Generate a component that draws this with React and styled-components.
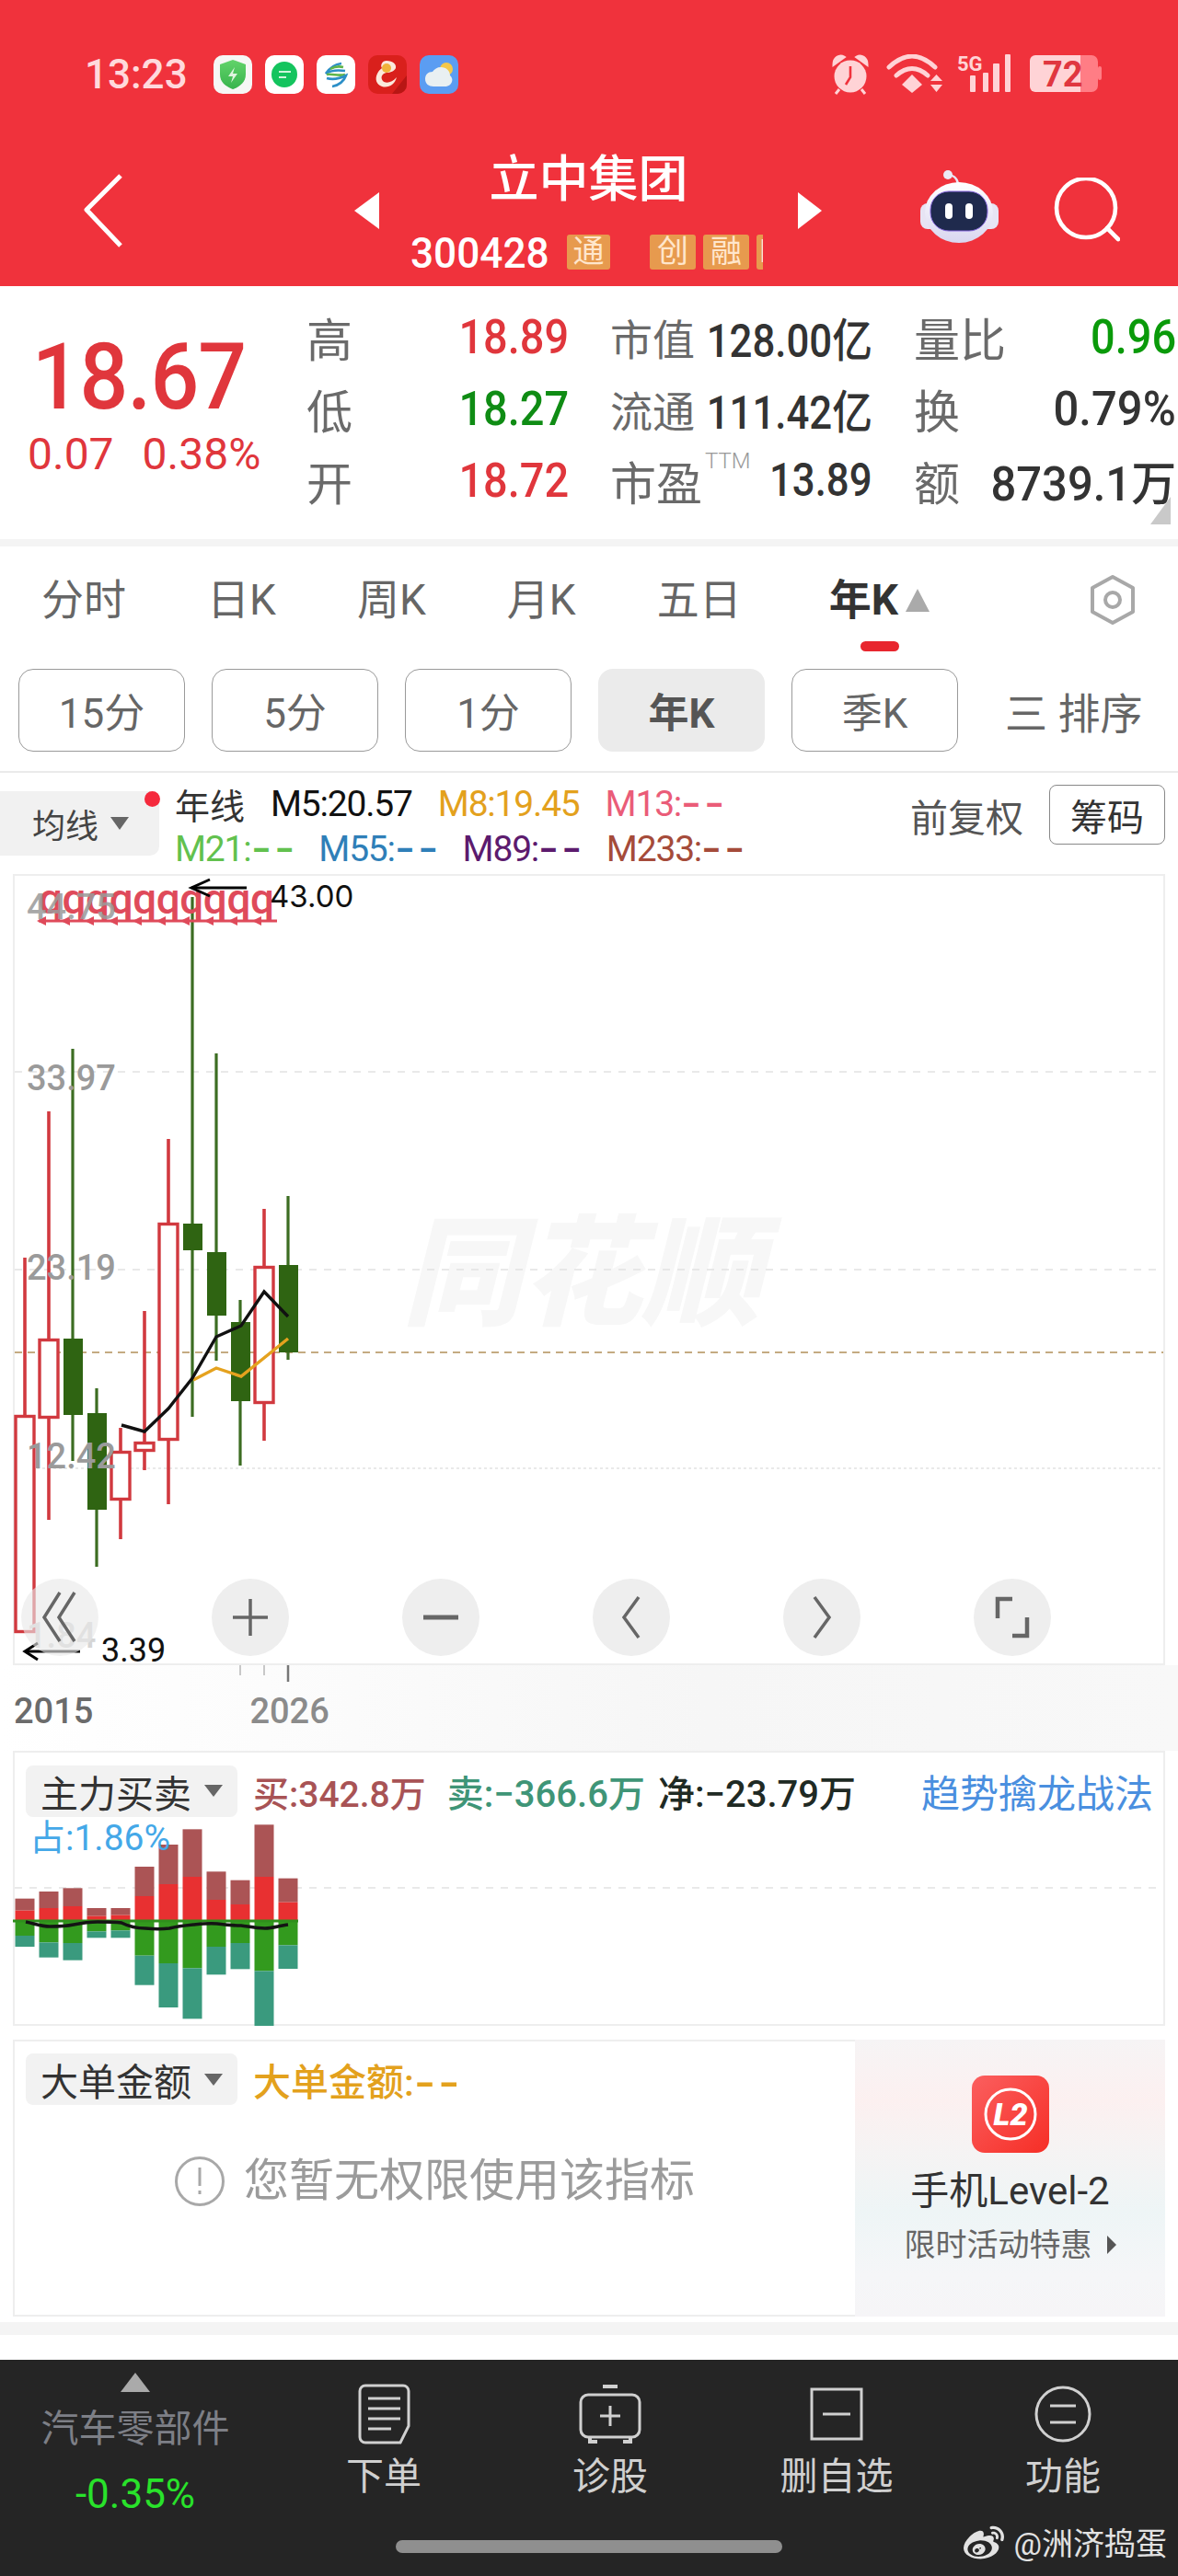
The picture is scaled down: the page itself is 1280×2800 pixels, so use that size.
import React from 'react';
import styled, { createGlobalStyle } from 'styled-components';
import { FaWeibo } from 'react-icons/fa';

const Global = createGlobalStyle`
  html, body { margin: 0; padding: 0; background: #fff; }
  * { box-sizing: border-box; }
  body { font-family: Roboto, "Noto Sans CJK SC", sans-serif; }
`;

const Page = styled.div`
  width: 1280px;
  height: 2800px;
  overflow: hidden;
  display: flex;
  flex-direction: column;
  background: #fff;
`;

/* ---------- header ---------- */
const Header = styled.header`
  height: 311px;
  background: #f0323c;
  padding-top: 60px;
  color: #fff;
`;
const StatusBar = styled.div`
  height: 42px;
  padding: 0 81px 0 92px;
  display: flex;
  align-items: center;
  justify-content: space-between;
`;
const StatusLeft = styled.div`
  display: flex;
  align-items: center;
  gap: 14px;
`;
const Clock = styled.span`
  font-size: 44px;
  font-weight: 500;
  color: #ffd9dc;
  width: 126px;
`;
const AppTile = styled.div`
  width: 42px;
  height: 42px;
  border-radius: 10px;
  overflow: hidden;
  background: ${p => p.$bg || '#fff'};
  display: flex;
`;
const StatusRight = styled.div`
  display: flex;
  align-items: center;
`;
const Nav = styled.nav`
  margin-top: 63px;
  height: 128px;
  padding-left: 90px;
  display: flex;
  align-items: center;
`;
const Tri = styled.i`
  display: block;
  width: 0;
  height: 0;
  border-top: ${p => p.$h / 2}px solid transparent;
  border-bottom: ${p => p.$h / 2}px solid transparent;
  ${p => (p.$right ? `border-left: ${p.$w}px solid #fff;` : `border-right: ${p.$w}px solid #fff;`)}
`;
const BackSlot = styled.div`
  width: 322px;
  display: flex;
  justify-content: space-between;
  align-items: center;
  flex: none;
`;
const TitleBlock = styled.div`
  width: 455px;
  flex: none;
  display: flex;
  flex-direction: column;
  align-items: center;
`;
const Title = styled.div`
  font-size: 54px;
  line-height: 62px;
  font-weight: 500;
`;
const CodeRow = styled.div`
  margin-top: 28px;
  width: 383px;
  height: 38px;
  overflow: hidden;
  display: flex;
  align-items: center;
  transform: translateX(-2px);
`;
const Code = styled.span`
  font-size: 47px;
  font-weight: 500;
  width: 162px;
  flex: none;
  transform: scaleX(0.94);
  transform-origin: left center;
`;
const Tag = styled.span`
  flex: none;
  height: 38px;
  width: ${p => p.$w || 50}px;
  margin-left: ${p => p.$ml || 8}px;
  background: #e79a4e;
  color: #ffe6cc;
  font-size: 34px;
  line-height: 36px;
  border-radius: 3px;
  text-align: center;
  overflow: hidden;
  white-space: nowrap;
`;
const NavRight = styled.div`
  display: flex;
  align-items: center;
`;

/* ---------- quote ---------- */
const Quote = styled.section`
  position: relative;
  height: 275px;
  display: flex;
`;
const PriceCol = styled.div`
  width: 333px;
  flex: none;
  padding: 47px 0 0 30px;
`;
const Price = styled.div`
  font-size: 100px;
  line-height: 104px;
  font-weight: 500;
  color: #e0363c;
  padding-left: 5px;
  letter-spacing: -1px;
  transform: scaleX(0.93);
  transform-origin: left center;
`;
const PriceSub = styled.div`
  margin-top: 5px;
  display: flex;
  gap: 31px;
  font-size: 48px;
  line-height: 54px;
  color: #e0363c;
`;
const StatGrid = styled.div`
  width: 947px;
  padding-top: 16px;
  display: grid;
  grid-template-columns: repeat(3, 285px);
  grid-auto-rows: 78px;
  column-gap: 45px;
  align-content: start;
`;
const Stat = styled.div`
  display: flex;
  align-items: center;
  justify-content: space-between;
  white-space: nowrap;
`;
const StatLabel = styled.span`
  font-size: ${p => p.$size || 50}px;
  color: #6a6a6a;
  display: flex;
  align-items: flex-start;
`;
const Sup = styled.sup`
  font-size: 24px;
  line-height: 30px;
  color: #999;
  font-weight: 300;
  margin-left: 3px;
  vertical-align: top;
`;
const StatValue = styled.span`
  font-size: ${p => p.$size || 51}px;
  font-weight: 500;
  color: ${p => p.$color || '#333'};
  margin-left: -60px;
  transform: scaleX(${p => p.$scale || 0.92});
  transform-origin: right center;
`;
const Corner = styled.i`
  position: absolute;
  right: 8px;
  bottom: 16px;
  width: 22px;
  height: 30px;
  background: #c9c9c9;
  clip-path: polygon(100% 0, 100% 100%, 0 100%);
`;
const Band = styled.div`
  height: ${p => p.$h}px;
  background: #f4f4f4;
  flex: none;
`;

/* ---------- tabs ---------- */
const TabRow = styled.div`
  height: 116px;
  margin-bottom: 17px;
  padding: 0 43px 0 45px;
  display: flex;
  align-items: center;
  gap: 88px;
`;
const Tab = styled.span`
  position: relative;
  font-size: 46px;
  line-height: 60px;
  color: ${p => (p.$active ? '#333' : '#666')};
  font-weight: ${p => (p.$active ? 700 : 400)};
  display: flex;
  align-items: center;
  gap: 8px;
  margin-left: ${p => (p.$active ? 7 : 0)}px;
  ${p =>
    p.$active &&
    `&::after {
      content: '';
      position: absolute;
      left: 34px;
      bottom: -26px;
      width: 42px;
      height: 11px;
      border-radius: 6px;
      background: #e8262e;
    }`}
`;
const Caret = styled.i`
  display: block;
  width: 0;
  height: 0;
  flex: none;
  border-left: ${p => p.$w / 2}px solid transparent;
  border-right: ${p => p.$w / 2}px solid transparent;
  ${p => (p.$up ? 'border-bottom' : 'border-top')}: ${p => p.$h}px solid ${p => p.$color};
`;
const TabSettings = styled.span`
  margin-left: auto;
  display: flex;
`;
const PeriodRow = styled.div`
  padding-left: 20px;
  display: flex;
  gap: 29px;
  align-items: center;
  height: 90px;
`;
const Period = styled.div`
  width: 181px;
  height: 90px;
  border-radius: 16px;
  border: ${p => (p.$active ? 'none' : '1px solid #9a9a9a')};
  background: ${p => (p.$active ? '#ebebeb' : '#fff')};
  font-size: 44px;
  font-weight: ${p => (p.$active ? 700 : 400)};
  color: ${p => (p.$active ? '#555' : '#666')};
  display: flex;
  align-items: center;
  justify-content: center;
`;
const Sort = styled.div`
  margin-left: 22px;
  font-size: 46px;
  color: #666;
  white-space: pre;
`;
const Divider = styled.div`
  margin-top: 21px;
  height: 2px;
  background: #eaeaea;
`;

/* ---------- indicators ---------- */
const IndicatorRow = styled.div`
  height: 110px;
  display: flex;
  align-items: flex-start;
`;
const MaPill = styled.div`
  position: relative;
  margin-top: 20px;
  width: 173px;
  height: 70px;
  border-radius: 0 10px 10px 0;
  background: #f1f1f1;
  padding-left: 35px;
  display: flex;
  align-items: center;
  gap: 13px;
  font-size: 36px;
  color: #444;
`;
const RedDot = styled.i`
  position: absolute;
  right: -1px;
  top: 0;
  width: 17px;
  height: 17px;
  border-radius: 50%;
  background: #f5293c;
`;
const Legend = styled.div`
  margin: 9px 0 0 17px;
  display: flex;
  flex-direction: column;
`;
const LegendLine = styled.div`
  height: 49px;
  display: flex;
  align-items: center;
  gap: 28px;
`;
const LegendItem = styled.span`
  font-size: ${p => p.$size || 39}px;
  color: ${p => p.$color || '#111'};
  letter-spacing: ${p => (p.$size ? 0 : -1.2)}px;
  white-space: nowrap;
`;
const Dashes = styled.span`
  display: inline-block;
  margin-right: 11px;
  letter-spacing: 2px;
  font-weight: 700;
  transform: scaleX(1.45);
  transform-origin: left center;
`;
const IndicatorTools = styled.div`
  margin-left: auto;
  padding: 13px 14px 0 0;
  display: flex;
  align-items: center;
  gap: 28px;
`;
const ToolText = styled.span`
  font-size: 41px;
  color: #555;
`;
const ChipBtn = styled.span`
  width: 126px;
  height: 65px;
  border: 1px solid #888;
  border-radius: 8px;
  font-size: 40px;
  color: #333;
  display: flex;
  align-items: center;
  justify-content: center;
`;

/* ---------- chart ---------- */
const ChartBox = styled.div`
  position: relative;
  margin: 0 14px;
  height: 860px;
  border: 2px solid #eee;
  flex: none;
`;
const FullSvg = styled.svg`
  position: absolute;
  left: -2px;
  top: -2px;
  display: block;
`;
const RoundRow = styled.div`
  position: absolute;
  left: 7px;
  bottom: 8px;
  display: flex;
  gap: 123px;
`;
const RoundBtn = styled.div`
  width: 84px;
  height: 84px;
  border-radius: 50%;
  background: ${p => (p.$ghost ? 'rgba(232,232,232,.62)' : '#eeeeee')};
  display: flex;
  align-items: center;
  justify-content: center;
`;
const AxisArea = styled.div`
  height: 93px;
  flex: none;
  background: linear-gradient(90deg, #fff 0, #fbfbfb 30%, #f6f6f6 60%, #f8f8f8 100%);
`;
const TickStrip = styled.svg`
  display: block;
  margin-left: 258px;
`;
const YearRow = styled.div`
  margin-top: 9px;
  padding-left: 15px;
  display: flex;
  gap: 170px;
  font-size: 38px;
  line-height: 44px;
  font-weight: 500;
  color: #6b6b6b;
`;
const FadedYear = styled.span`
  color: #8b8b8b;
`;

/* ---------- panels ---------- */
const Panel = styled.div`
  position: relative;
  margin: 0 14px;
  height: ${p => p.$h}px;
  border: 2px solid #eee;
  flex: none;
  display: flex;
`;
const PanelBody = styled.div`
  position: relative;
  flex: 1;
  min-width: 0;
  padding: 11px 0 0 12px;
`;
const PanelHead = styled.div`
  display: flex;
  align-items: center;
  gap: 17px;
  padding-right: 11px;
`;
const PickPill = styled.div`
  width: 230px;
  height: 56px;
  border-radius: 8px;
  background: #f2f2f2;
  padding-left: 16px;
  display: flex;
  align-items: center;
  gap: 14px;
  font-size: 41px;
  color: #333;
  flex: none;
`;
const FlowVal = styled.span`
  font-size: ${p => p.$size || 39}px;
  color: ${p => p.$color};
  font-weight: 500;
  white-space: nowrap;
  margin-left: ${p => p.$ml || 0}px;
`;
const Promo = styled.span`
  margin-left: auto;
  font-size: 42px;
  color: #4a8fdf;
`;
const Occupy = styled.div`
  margin: -2px 0 0 4px;
  font-size: 39px;
  line-height: 46px;
  color: #44a8e8;
`;
const Warn = styled.div`
  margin-top: 52px;
  display: flex;
  align-items: center;
  justify-content: center;
  gap: 21px;
  font-size: 49px;
  line-height: 58px;
  color: #9b9b9b;
  padding-right: 12px;
`;
const Ad = styled.aside`
  width: 337px;
  flex: none;
  margin: -2px -2px -2px 0;
  background: linear-gradient(180deg, #f6f4f5 0, #fcf0f0 22%, #f6f3f3 38%, #eef5f6 62%, #f5f6f8 85%, #f6f5f7 100%);
  display: flex;
  flex-direction: column;
  align-items: center;
  padding-top: 39px;
`;
const AdTitle = styled.div`
  margin-top: 17px;
  font-size: 42px;
  line-height: 50px;
  color: #333;
`;
const AdSub = styled.div`
  margin-top: 11px;
  font-size: 34px;
  line-height: 44px;
  color: #666;
  display: flex;
  align-items: center;
  gap: 16px;
`;
const SideCaret = styled.i`
  display: block;
  width: 0;
  height: 0;
  border-top: 10px solid transparent;
  border-bottom: 10px solid transparent;
  border-left: 10px solid #555;
`;

/* ---------- footer ---------- */
const Spacer = styled.div`
  height: ${p => p.$h}px;
  flex: none;
`;
const Footer = styled.footer`
  position: relative;
  flex: 1;
  background: #252525;
  display: flex;
  flex-direction: column;
`;
const FootRow = styled.div`
  height: 196px;
  display: flex;
`;
const Sector = styled.div`
  width: 294px;
  padding-top: 14px;
  display: flex;
  flex-direction: column;
  align-items: center;
`;
const SectorName = styled.div`
  margin-top: 16px;
  font-size: 41px;
  line-height: 48px;
  color: #7d7f86;
`;
const SectorPct = styled.div`
  margin-top: 23px;
  font-size: 44px;
  line-height: 48px;
  color: #29e22b;
`;
const FootItem = styled.div`
  width: 246px;
  padding-top: 25px;
  display: flex;
  flex-direction: column;
  align-items: center;
`;
const FootIcon = styled.div`
  height: 68px;
  display: flex;
  align-items: center;
  justify-content: center;
`;
const FootLabel = styled.div`
  margin-top: 9px;
  font-size: 41px;
  line-height: 50px;
  color: #d0d0d0;
`;
const HomeBar = styled.div`
  align-self: center;
  width: 420px;
  height: 14px;
  border-radius: 7px;
  background: #8f8f8f;
`;
const Mark = styled.div`
  position: absolute;
  right: 12px;
  bottom: 13px;
  display: flex;
  align-items: center;
  gap: 10px;
  font-size: 34px;
  line-height: 42px;
  color: #e2e2e2;
`;

/* ---------- data ---------- */
const RED = '#d1393f';
const GRN = '#2f6412';
const candles = [
  { up: 1, wt: 1367, wb: 1775, bt: 1538, bb: 1775 },
  { up: 1, wt: 1208, wb: 1652, bt: 1455, bb: 1542 },
  { up: 0, wt: 1140, wb: 1588, bt: 1455, bb: 1538 },
  { up: 0, wt: 1509, wb: 1703, bt: 1536, bb: 1641 },
  { up: 1, wt: 1552, wb: 1673, bt: 1577, bb: 1631 },
  { up: 1, wt: 1425, wb: 1598, bt: 1567, bb: 1578 },
  { up: 1, wt: 1238, wb: 1635, bt: 1329, bb: 1566 },
  { up: 0, wt: 975, wb: 1540, bt: 1330, bb: 1359 },
  { up: 0, wt: 1145, wb: 1479, bt: 1361, bb: 1430 },
  { up: 0, wt: 1413, wb: 1593, bt: 1437, bb: 1523 },
  { up: 1, wt: 1314, wb: 1566, bt: 1376, bb: 1526 },
  { up: 0, wt: 1300, wb: 1478, bt: 1375, bb: 1470 },
];
const flows = [
  [551, 590, 672, 708],
  [528, 582, 694, 743],
  [517, 576, 696, 752],
  [582, 608, 658, 679],
  [582, 605, 655, 679],
  [447, 543, 737, 833],
  [375, 504, 762, 906],
  [325, 480, 778, 943],
  [463, 555, 708, 799],
  [491, 570, 696, 781],
  [310, 480, 787, 966],
  [485, 563, 703, 780],
];
const cx = i => 27 + 26 * i;

const Candle = ({ c, i }) => {
  const x = cx(i);
  const color = c.up ? RED : GRN;
  return (
    <g>
      <line x1={x} x2={x} y1={c.wt} y2={c.wb} stroke={c.up ? RED : '#3c6d22'} strokeWidth={c.up ? 3.6 : 3.2} />
      <rect
        x={x - 10}
        y={c.bt + (c.up ? 1.5 : 0)}
        width={c.up ? 20 : 21}
        height={c.bb - c.bt - (c.up ? 3 : 0)}
        fill={c.up ? '#fff' : color}
        stroke={c.up ? RED : 'none'}
        strokeWidth="3.4"
      />
    </g>
  );
};

const ArrowLeft = ({ x1, x2, y, head = 20 }) => (
  <g stroke="#000" strokeWidth="3" fill="none">
    <path d={`M${x2} ${y}H${x1}`} />
    <path d={`M${x1 + head} ${y - 9}L${x1} ${y}L${x1 + head} ${y + 9}`} />
  </g>
);

const MainChart = () => (
  <FullSvg width="1252" height="860" viewBox="14 950 1252 860">
    <text x="632" y="1430" fontSize="130" fontWeight="900" fontStyle="italic" textAnchor="middle" fill="#f7f7f7" fontFamily='"Noto Sans CJK SC", sans-serif'>同花顺</text>
    {[1165, 1380, 1596].map(y => (
      <line key={y} x1="16" x2="1264" y1={y} y2={y} stroke="#e2e2e2" strokeWidth="1.5" strokeDasharray={y === 1596 ? '3 3' : '8 8'} />
    ))}
    <line x1="16" x2="1264" y1="1470" y2="1470" stroke="#c4ab82" strokeWidth="2" strokeDasharray="8 6" />
    {candles.map((c, i) => (
      <Candle key={i} c={c} i={i} />
    ))}
    <polyline points="210,1500 235,1487 262,1496 313,1455" fill="none" stroke="#e5a21e" strokeWidth="3.4" />
    <polyline points="132,1549 157,1556 183,1531 209,1498 235,1453 262,1441 287,1404 313,1431" fill="none" stroke="#111" strokeWidth="3.4" />
    <text x="42" y="993" fontFamily="Roboto, sans-serif" fontWeight="500" fontSize="46" fill="#df4a5a" textLength="256">qqqqqqqqqq</text>
    <line x1="42" x2="301" y1="1001" y2="1001" stroke="#df4a5a" strokeWidth="3" />
    {Array.from({ length: 10 }).map((_, i) => (
      <path key={i} d={`M${40 + 26 * i} 1001l10 -5v10z`} fill="#df4a5a" />
    ))}
    <g fontFamily="Roboto, sans-serif" fontWeight="500" fontSize="38" fill="#9a9a9a">
      <text x="29" y="999" opacity="0.85">44.75</text>
      <text x="29" y="1185">33.97</text>
      <text x="29" y="1391">23.19</text>
      <text x="29" y="1596">12.42</text>
      <text x="29" y="1791" fill="#d5d5d5">1.84</text>
    </g>
    <ArrowLeft x1={208} x2={268} y={965} />
    <text x="293" y="986" fontFamily="Inter, sans-serif" fontSize="33" fill="#111">43.00</text>
    <ArrowLeft x1={27} x2={87} y={1795} head={14} />
    <text x="110" y="1806" fontFamily="Roboto, sans-serif" fontSize="36" fill="#111">3.39</text>
  </FullSvg>
);

const glyph = { stroke: '#666', strokeWidth: 3.5, fill: 'none' };
const RoundIcon = ({ children }) => (
  <svg width="60" height="60" viewBox="0 0 60 60" {...glyph}>
    {children}
  </svg>
);

const FlowChart = () => (
  <FullSvg width="1252" height="299" viewBox="14 1903 1252 299">
    <line x1="16" x2="1264" y1="2052" y2="2052" stroke="#e2e2e2" strokeWidth="1.5" strokeDasharray="8 8" />
    {flows.map((f, i) => {
      const y = v => 1880 + v / 3;
      const x = cx(i) - 10.5;
      return (
        <g key={i}>
          <rect x={x} y={y(f[0])} width="21" height={y(f[1]) - y(f[0])} fill="#ab5455" />
          <rect x={x} y={y(f[1])} width="21" height={y(622) - y(f[1])} fill="#e83031" />
          <rect x={x} y={y(622)} width="21" height={y(f[2]) - y(622)} fill="#339a1e" />
          <rect x={x} y={y(f[2])} width="21" height={y(f[3]) - y(f[2])} fill="#3a9a7e" />
        </g>
      );
    })}
    <line x1="14" x2="324" y1="2088" y2="2088" stroke="#2e8f1c" strokeWidth="3" />
    <path
      d="M28 2089C38 2091 46 2094 54 2094C62 2094 70 2094 80 2092C90 2090 98 2089 106 2089C114 2089 124 2089 132 2090C140 2094 148 2096 158 2096C168 2097 176 2097 184 2096C192 2094 200 2093 210 2092C220 2091 228 2090 236 2091C244 2092 252 2093 262 2093C270 2094 278 2096 288 2096C296 2096 304 2093 313 2092"
      fill="none"
      stroke="#141414"
      strokeWidth="3.6"
    />
  </FullSvg>
);

export default function App() {
  return (
    <Page>
      <Global />
      <Header>
        <StatusBar>
          <StatusLeft>
            <Clock>13:23</Clock>
            <AppTile $bg="#f6f7f5">
              <svg width="42" height="42" viewBox="0 0 42 42">
                <defs>
                  <linearGradient id="sh" x1="0" x2="0" y1="0" y2="1">
                    <stop offset="0" stopColor="#62d36a" />
                    <stop offset="1" stopColor="#38b44c" />
                  </linearGradient>
                </defs>
                <path d="M21 5l14 5v11c0 8-6 13-14 16C13 34 7 29 7 21V10z" fill="url(#sh)" />
                <path d="M23 13l-7 10h5l-2 7 7-10h-5z" fill="#dff5de" />
              </svg>
            </AppTile>
            <AppTile>
              <svg width="42" height="42" viewBox="0 0 42 42">
                <circle cx="21" cy="21" r="14" fill="#14c45e" />
                <path d="M11 31l2-7 5 5z" fill="#14c45e" />
                <path d="M15 18h13M15 24h8" stroke="#cff5dc" strokeWidth="2.2" />
              </svg>
            </AppTile>
            <AppTile>
              <svg width="42" height="42" viewBox="0 0 42 42" fill="none" strokeWidth="2.6">
                <path d="M27 9C19 10 14 14 10 20C16 16 24 16 31 17" stroke="#2c8fc7" />
                <path d="M11 21C17 20 25 23 31 21" stroke="#5fb54a" />
                <path d="M11 25C18 27 24 26 32 22C30 28 24 33 17 34" stroke="#2c8fc7" />
                <path d="M15 15C20 12 25 12 29 13" stroke="#5fb54a" />
              </svg>
            </AppTile>
            <AppTile $bg="#d9201c">
              <svg width="42" height="42" viewBox="0 0 42 42">
                <path d="M20 6c7 0 11 4 10 8-1 3-6 5-10 5-5 1-7 5-4 9 3 3 10 2 15-4-2 8-9 12-16 10C9 32 7 26 10 20c2-4 4-5 5-6-2-3 0-8 5-8z" fill="#fbe9dc" />
                <circle cx="20" cy="14" r="5" fill="#f0b23a" />
                <path d="M26 42L42 22v20z" fill="#b81614" />
              </svg>
            </AppTile>
            <AppTile $bg="#5b9df2">
              <svg width="42" height="42" viewBox="0 0 42 42">
                <circle cx="29" cy="15" r="7" fill="#f4c84a" />
                <path d="M15 34c-5 0-9-3-9-8s3-8 8-8c2-3 5-5 9-5 6 0 10 4 10 9 2 2 3 4 2 7-1 3-4 5-8 5z" fill="#e9f0f2" />
              </svg>
            </AppTile>
          </StatusLeft>
          <StatusRight>
            <svg width="296" height="44" viewBox="0 0 296 44" fill="#ffd3d6">
              <circle cx="21" cy="24" r="17.5" />
              <path d="M3 11C3 4 9 0 14 3zM39 11c0-7-6-11-11-8zM9 38l-4 5M33 38l4 5" stroke="#ffd3d6" strokeWidth="3" />
              <path d="M21 13v12l-5 8" stroke="#f0323c" strokeWidth="2.6" fill="none" />
              <path d="M63 14C80 -2 96 -2 113 14M71 23c11 -10 23 -10 34 0" stroke="#ffd3d6" strokeWidth="5" fill="none" strokeLinecap="round" />
              <path d="M88 22l11 11-11 9-11-9z" />
              <path d="M108 25h13l-6.500-7zM108 29h13l-6.500 8z" transform="translate(0 4)" />
              <text x="137" y="18" fontFamily="Roboto, sans-serif" fontWeight="700" fontSize="22">5G</text>
              <rect x="151" y="23" width="6" height="18" rx="1" />
              <rect x="165" y="20" width="6" height="21" rx="1" />
              <rect x="176" y="10" width="7" height="31" rx="1" />
              <rect x="189" y="0" width="6" height="41" rx="1" />
              <path d="M216 7a6 6 0 0 1 6 -6h49v40h-49a6 6 0 0 1 -6 -6z" />
              <path d="M271 1h12a7 7 0 0 1 7 7v26a7 7 0 0 1 -7 7h-12z" fill="#ff7d85" />
              <rect x="290" y="13" width="4" height="15" rx="2" fill="#ff7d85" />
              <text x="230" y="35" fontFamily="Roboto, sans-serif" fontWeight="700" fontSize="38" fill="#e03640">72</text>
            </svg>
          </StatusRight>
        </StatusBar>
        <Nav>
          <BackSlot>
            <svg width="44" height="80" viewBox="0 0 44 80" fill="none" stroke="#fff" strokeWidth="5">
              <path d="M41 2L4 39L41 78" strokeLinejoin="round" />
            </svg>
            <Tri $w={27} $h={41} />
          </BackSlot>
          <TitleBlock>
            <Title>立中集团</Title>
            <CodeRow>
              <Code>300428</Code>
              <Tag $w={47} $ml={0}>通</Tag>
              <Tag $ml={43}>创</Tag>
              <Tag>融</Tag>
              <Tag $w={15}>l</Tag>
            </CodeRow>
          </TitleBlock>
          <Tri $right $w={26} $h={41} />
          <NavRight>
            <svg width="86" height="88" viewBox="0 0 86 88" style={{ marginLeft: 107 }}>
              <defs>
                <linearGradient id="rb" x1="0" x2="0" y1="0" y2="1">
                  <stop offset="0" stopColor="#ffffff" />
                  <stop offset="1" stopColor="#d9d6f0" />
                </linearGradient>
              </defs>
              <path d="M41 15c-1-7-6-10-11-10" stroke="#e9e6f5" strokeWidth="2.5" fill="none" />
              <circle cx="30" cy="5" r="5" fill="#eceaf6" />
              <rect x="0" y="36" width="85" height="28" rx="8" fill="#e7e4f4" />
              <ellipse cx="42" cy="46" rx="37" ry="33" fill="url(#rb)" />
              <rect x="11" y="23" width="62" height="43" rx="20" fill="#1f2a4d" stroke="#8b6be0" strokeWidth="1" />
              <rect x="27" y="36" width="8" height="17" rx="4" fill="#fff" />
              <rect x="49" y="36" width="8" height="17" rx="4" fill="#fff" />
            </svg>
            <svg width="72" height="72" viewBox="0 0 72 72" fill="none" stroke="#fff" strokeWidth="4.6" style={{ marginLeft: 59 }}>
              <circle cx="35" cy="33" r="32" />
              <path d="M58 55l12 12" strokeLinecap="round" />
            </svg>
          </NavRight>
        </Nav>
      </Header>

      <Quote>
        <PriceCol>
          <Price>18.67</Price>
          <PriceSub>
            <span>0.07</span>
            <span>0.38%</span>
          </PriceSub>
        </PriceCol>
        <StatGrid>
          <Stat><StatLabel>高</StatLabel><StatValue $color="#e0363c">18.89</StatValue></Stat>
          <Stat><StatLabel $size={46}>市值</StatLabel><StatValue $size={50} $scale={0.875}>128.00亿</StatValue></Stat>
          <Stat><StatLabel>量比</StatLabel><StatValue $color="#0a9a0a">0.96</StatValue></Stat>
          <Stat><StatLabel>低</StatLabel><StatValue $color="#0f8c14">18.27</StatValue></Stat>
          <Stat><StatLabel $size={46}>流通</StatLabel><StatValue $size={50} $scale={0.875}>111.42亿</StatValue></Stat>
          <Stat><StatLabel>换</StatLabel><StatValue $scale={0.96}>0.79%</StatValue></Stat>
          <Stat><StatLabel>开</StatLabel><StatValue $color="#e0363c">18.72</StatValue></Stat>
          <Stat><StatLabel>市盈<Sup>TTM</Sup></StatLabel><StatValue $size={50} $scale={0.875}>13.89</StatValue></Stat>
          <Stat><StatLabel>额</StatLabel><StatValue $scale={0.96}>8739.1万</StatValue></Stat>
        </StatGrid>
        <Corner />
      </Quote>
      <Band $h={8} />

      <TabRow>
        <Tab>分时</Tab>
        <Tab>日K</Tab>
        <Tab>周K</Tab>
        <Tab>月K</Tab>
        <Tab>五日</Tab>
        <Tab $active>
          年K
          <Caret $up $w={27} $h={25} $color="#aaa" />
        </Tab>
        <TabSettings>
          <svg width="56" height="56" viewBox="0 0 56 56" fill="none" stroke="#a8a8a8" strokeWidth="4">
            <path d="M28 3L50 15V41L28 53L6 41V15Z" strokeLinejoin="round" />
            <circle cx="28" cy="28" r="8" />
          </svg>
        </TabSettings>
      </TabRow>
      <PeriodRow>
        <Period>15分</Period>
        <Period>5分</Period>
        <Period>1分</Period>
        <Period $active>年K</Period>
        <Period>季K</Period>
        <Sort>三 排序</Sort>
      </PeriodRow>
      <Divider />

      <IndicatorRow>
        <MaPill>
          均线
          <Caret $w={20} $h={14} $color="#666" />
          <RedDot />
        </MaPill>
        <Legend>
          <LegendLine>
            <LegendItem $size={38} $color="#333">年线</LegendItem>
            <LegendItem>M5:20.57</LegendItem>
            <LegendItem $color="#e3a11d">M8:19.45</LegendItem>
            <LegendItem $color="#ea5c78">M13:<Dashes>--</Dashes></LegendItem>
          </LegendLine>
          <LegendLine>
            <LegendItem $color="#62c14e">M21:<Dashes>--</Dashes></LegendItem>
            <LegendItem $color="#2f7fb8">M55:<Dashes>--</Dashes></LegendItem>
            <LegendItem $color="#5c1b6e">M89:<Dashes>--</Dashes></LegendItem>
            <LegendItem $color="#a54b3a">M233:<Dashes>--</Dashes></LegendItem>
          </LegendLine>
        </Legend>
        <IndicatorTools>
          <ToolText>前复权</ToolText>
          <ChipBtn>筹码</ChipBtn>
        </IndicatorTools>
      </IndicatorRow>

      <ChartBox>
        <MainChart />
        <RoundRow>
          <RoundBtn $ghost>
            <RoundIcon>
              <path d="M30 3L13 30L30 56M46 3L29 30L46 56" />
            </RoundIcon>
          </RoundBtn>
          <RoundBtn>
            <RoundIcon>
              <path d="M30 10V50M11 30H49" />
            </RoundIcon>
          </RoundBtn>
          <RoundBtn>
            <RoundIcon>
              <path d="M11 30H49" strokeWidth="5" />
            </RoundIcon>
          </RoundBtn>
          <RoundBtn>
            <RoundIcon>
              <path d="M38 8L22 30L38 52" />
            </RoundIcon>
          </RoundBtn>
          <RoundBtn>
            <RoundIcon>
              <path d="M22 8L38 30L22 52" />
            </RoundIcon>
          </RoundBtn>
          <RoundBtn>
            <RoundIcon>
              <path d="M30 10H14V31M46 30V50H30" strokeWidth="4.500" />
            </RoundIcon>
          </RoundBtn>
        </RoundRow>
      </ChartBox>

      <AxisArea>
        <TickStrip width="60" height="19" viewBox="0 0 60 19">
          <path d="M3 0V11M29 0V11" stroke="#c8c8c8" strokeWidth="2" />
          <path d="M55 0V18" stroke="#777" strokeWidth="2.5" />
        </TickStrip>
        <YearRow>
          <span>2015</span>
          <FadedYear>2026</FadedYear>
        </YearRow>
      </AxisArea>

      <Panel $h={299}>
        <FlowChart />
        <PanelBody>
          <PanelHead>
            <PickPill>
              主力买卖
              <Caret $w={20} $h={13} $color="#666" />
            </PickPill>
            <FlowVal $color="#a85355">买:342.8万</FlowVal>
            <FlowVal $size={40} $color="#3f9577" $ml={6}>卖:−366.6万</FlowVal>
            <FlowVal $size={40} $color="#1f2a24" $ml={-3}>净:−23.79万</FlowVal>
            <Promo>趋势擒龙战法</Promo>
          </PanelHead>
          <Occupy>占:1.86%</Occupy>
        </PanelBody>
      </Panel>

      <Spacer $h={15} />

      <Panel $h={301}>
        <PanelBody>
          <PanelHead>
            <PickPill>
              大单金额
              <Caret $w={20} $h={13} $color="#666" />
            </PickPill>
            <FlowVal $size={41} $color="#e3a11d">大单金额:<Dashes>--</Dashes></FlowVal>
          </PanelHead>
          <Warn>
            <svg width="54" height="56" viewBox="0 0 54 56" fill="none" stroke="#a8a8a8" strokeWidth="3">
              <circle cx="27" cy="28" r="25.500" />
              <path d="M27 13V33M27 38V42" />
            </svg>
            您暂无权限使用该指标
          </Warn>
        </PanelBody>
        <Ad>
          <svg width="84" height="84" viewBox="0 0 84 84">
            <defs>
              <linearGradient id="l2" x1="0" x2="1" y1="0" y2="1">
                <stop offset="0" stopColor="#fb5f5f" />
                <stop offset="1" stopColor="#f62e26" />
              </linearGradient>
            </defs>
            <rect width="84" height="84" rx="14" fill="url(#l2)" />
            <circle cx="42" cy="42" r="27" fill="none" stroke="#fff" strokeWidth="3" />
            <text x="42" y="54" textAnchor="middle" fontFamily="Roboto, sans-serif" fontWeight="900" fontStyle="italic" fontSize="34" fill="#fff">L2</text>
          </svg>
          <AdTitle>手机Level-2</AdTitle>
          <AdSub>
            限时活动特惠
            <SideCaret />
          </AdSub>
        </Ad>
      </Panel>

      <Spacer $h={6} />
      <Band $h={14} />
      <Spacer $h={27} />

      <Footer>
        <FootRow>
          <Sector>
            <Caret $up $w={32} $h={21} $color="#aaa" />
            <SectorName>汽车零部件</SectorName>
            <SectorPct>-0.35%</SectorPct>
          </Sector>
          <FootItem>
            <FootIcon>
              <svg width="57" height="66" viewBox="0 0 57 66" fill="none" stroke="#d0d0d0" strokeWidth="3">
                <path d="M8 2H49a6 6 0 0 1 6 6V46L46 64H8a6 6 0 0 1 -6 -6V8a6 6 0 0 1 6 -6z" />
                <path d="M11 16H46M11 27H46M11 38H46M11 49H36" />
              </svg>
            </FootIcon>
            <FootLabel>下单</FootLabel>
          </FootItem>
          <FootItem>
            <FootIcon>
              <svg width="68" height="64" viewBox="0 0 68 64" fill="none" stroke="#d0d0d0" strokeWidth="3">
                <path d="M26 2H42" strokeWidth="4" />
                <rect x="2" y="11" width="64" height="46" rx="8" />
                <path d="M34 23V45M23 34H45" />
                <path d="M12 57V62H20M48 62H56V57" strokeWidth="4" />
              </svg>
            </FootIcon>
            <FootLabel>诊股</FootLabel>
          </FootItem>
          <FootItem>
            <FootIcon>
              <svg width="58" height="58" viewBox="0 0 58 58" fill="none" stroke="#d0d0d0" strokeWidth="3">
                <rect x="2" y="2" width="54" height="54" />
                <path d="M14 29H44" />
              </svg>
            </FootIcon>
            <FootLabel>删自选</FootLabel>
          </FootItem>
          <FootItem>
            <FootIcon>
              <svg width="62" height="62" viewBox="0 0 62 62" fill="none" stroke="#d0d0d0" strokeWidth="3">
                <circle cx="31" cy="31" r="29" />
                <path d="M17 22H45M17 40H45" />
              </svg>
            </FootIcon>
            <FootLabel>功能</FootLabel>
          </FootItem>
        </FootRow>
        <HomeBar />
        <Mark>
          <FaWeibo size={44} />
          @洲济捣蛋
        </Mark>
      </Footer>
    </Page>
  );
}
